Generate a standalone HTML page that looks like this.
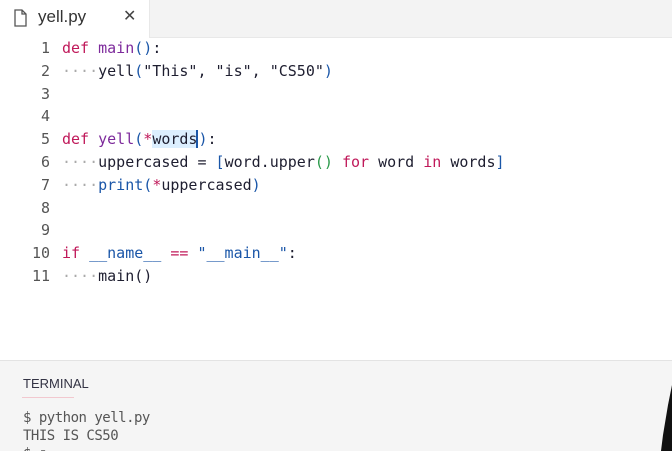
<!DOCTYPE html>
<html><head><style>
html,body{margin:0;width:672px;height:451px;overflow:hidden;background:#fff;position:relative;font-family:"DejaVu Sans Mono","Liberation Mono",monospace}
.tabbar{position:absolute;left:0;top:0;width:672px;height:37px;background:#f3f3f3;border-bottom:1px solid #e8e8e8}
.tab{position:absolute;left:0;top:0;width:149px;height:38px;background:#fff;border-right:1px solid #e8e8e8}
.tab .name{position:absolute;left:38px;top:7px;font:17px "Liberation Sans",sans-serif;color:#333}
.tab .x{position:absolute;left:123px;top:6px;font:16px "Liberation Sans",sans-serif;color:#444}
.code{position:absolute;left:0;top:37px;font-size:15px;line-height:22.8px;white-space:pre;color:#1e1e30}
.ln{display:inline-block;width:50px;text-align:right;color:#555;margin-right:12px}
.k{color:#c0195a}.f{color:#7d2a9b}.b{color:#1a56a8}.d{color:#aaa}
.term{position:absolute;left:0;top:360px;width:672px;height:91px;background:#f5f5f5;border-top:1px solid #e3e3e3}
.tl{position:absolute;left:23px;top:15px;font:13px "Liberation Sans",sans-serif;color:#334;}
.tu{position:absolute;left:22px;top:36px;width:52px;height:1px;background:#f2c8cf}
.tt{position:absolute;left:23px;top:48px;font-size:14px;line-height:18px;color:#555;white-space:pre;letter-spacing:-0.5px}
</style></head><body>
<div class="tabbar"><div class="tab">
<svg style="position:absolute;left:14px;top:9px" width="13" height="18" viewBox="0 0 13 18"><path d="M1 1h7l4 4v12H1z M8 1v4h4" fill="none" stroke="#555" stroke-width="1.3"/></svg>
<span class="name">yell.py</span><span class="x">✕</span></div></div>
<div class="code"><span class="ln">1</span><span class="k">def</span> <span class="f">main</span><span class="b">()</span>:
<span class="ln">2</span><span class="d">····</span>yell<span class="b">(</span>"This", "is", "CS50"<span class="b">)</span>
<span class="ln">3</span>
<span class="ln">4</span>
<span class="ln">5</span><span class="k">def</span> <span class="f">yell</span><span class="b">(</span><span class="k">*</span><span style="background:#dcefff">words</span><span style="border-left:2px solid #1a56a8;margin-left:-1px"></span><span class="b">)</span>:
<span class="ln">6</span><span class="d">····</span>uppercased = <span class="b">[</span>word.upper<span style="color:#2a9a4a">()</span> <span class="k">for</span> word <span class="k">in</span> words<span class="b">]</span>
<span class="ln">7</span><span class="d">····</span><span class="b">print(</span><span class="k">*</span>uppercased<span class="b">)</span>
<span class="ln">8</span>
<span class="ln">9</span>
<span class="ln">10</span><span class="k">if</span> <span class="b">__name__</span> <span class="k">==</span> <span class="b">"__main__"</span>:
<span class="ln">11</span><span class="d">····</span>main()</div>
<div class="term"><div class="tl">TERMINAL</div><div class="tu"></div>
<div class="tt">$ python yell.py
THIS IS CS50
$ ▯</div></div>
<svg style="position:absolute;left:655px;top:385px" width="17" height="66"><path d="M17 0 L13 20 L8 50 L6 66 L17 66Z" fill="#111"/></svg>
</body></html>
